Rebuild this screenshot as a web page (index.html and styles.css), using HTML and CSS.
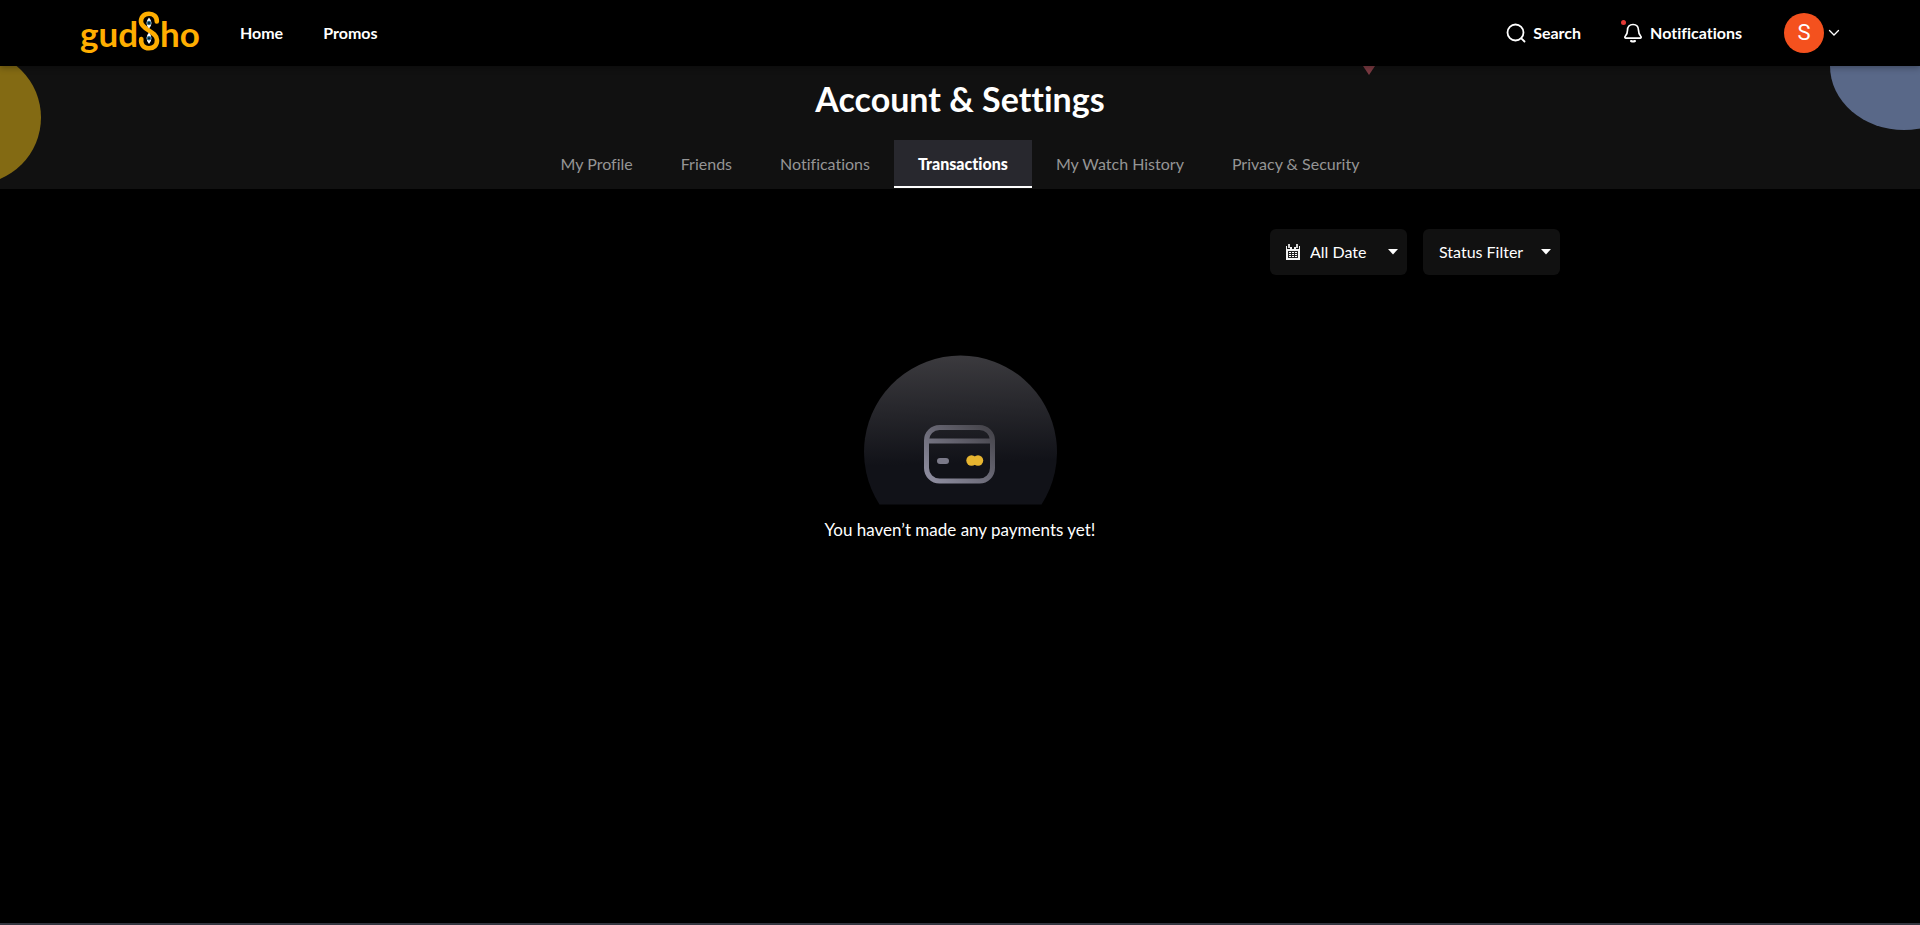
FILE: index.html
```
<!DOCTYPE html>
<html lang="en">
<head>
<meta charset="utf-8">
<meta name="viewport" content="width=device-width, initial-scale=1">
<title>Account &amp; Settings - gudSho</title>
<link rel="stylesheet" href="styles.css">
</head>
<body>
<header class="topbar">
  <a class="logo" href="#" aria-label="gudSho">
    <span>gud</span>
    <svg class="logo-mark" viewBox="0 0 22 40" width="22" height="40" aria-hidden="true">
      <path d="M18.800 10.500C19 5.500 15.500 2.700 11 2.700C5.500 2.700 2.700 6.500 3 11C3.600 18.500 18.700 20.500 19 29C19.200 34.500 15.500 37.300 11 37.300C5.800 37.300 2.300 33.500 3.300 28" fill="none" stroke="#ffae00" stroke-width="4.600" stroke-linecap="round"/>
      <path d="M11 6.500Q16 12 11 17.500Q6 12 11 6.500Z" fill="#fff"/>
      <path d="M11 21.500Q16 27 11 33Q6 27 11 21.500Z" fill="#fff"/>
      <circle cx="11" cy="12" r="2.200" fill="#2c6f91"/><circle cx="11" cy="12" r="1" fill="#04121c"/>
      <circle cx="11" cy="27.300" r="2.200" fill="#2c6f91"/><circle cx="11" cy="27.300" r="1" fill="#04121c"/>
    </svg>
    <span>ho</span>
  </a>
  <nav class="main-nav" aria-label="Main">
    <a href="#">Home</a>
    <a href="#">Promos</a>
  </nav>
  <div class="actions">
    <button class="action" type="button">
      <svg width="20" height="20" viewBox="0 0 20 20" fill="none" stroke="#fff" stroke-width="1.800" stroke-linecap="round" aria-hidden="true"><circle cx="9.500" cy="9.500" r="8"/><path d="M15.300 15.300L18.500 18.500"/></svg>
      Search
    </button>
    <button class="action" type="button">
      <span class="bell">
        <svg width="20" height="20" viewBox="0 0 20 20" fill="none" stroke="#fff" stroke-width="1.700" stroke-linejoin="round" stroke-linecap="round" aria-hidden="true"><path d="M10 1.500C6.500 1.500 4.500 4 4.500 7.300C4.500 11 3.300 12.300 2.100 13.500C1.500 14.300 2 15.100 2.900 15.100H17.100C18 15.100 18.500 14.300 17.900 13.500C16.700 12.300 15.500 11 15.500 7.300C15.500 4 13.500 1.500 10 1.500Z"/><path d="M8 18Q10 19 12 18" stroke-width="2"/></svg>
        <span class="dot"></span>
      </span>
      Notifications
    </button>
    <button class="account" type="button" aria-label="Account menu">
      <span class="avatar">S</span>
      <svg width="12" height="8" viewBox="0 0 12 8" fill="none" stroke="#fff" stroke-width="1.300" stroke-linecap="round" aria-hidden="true"><path d="M1.500 1.500L6 6L10.500 1.500"/></svg>
    </button>
  </div>
</header>

<section class="hero">
  <span class="shape shape-gold"></span>
  <span class="shape shape-blue"></span>
  <span class="shape shape-red"></span>
  <h1>Account &amp; Settings</h1>
  <nav class="tabs" aria-label="Account">
    <a href="#">My Profile</a>
    <a href="#">Friends</a>
    <a href="#">Notifications</a>
    <a class="active" href="#" aria-current="page">Transactions</a>
    <a href="#">My Watch History</a>
    <a href="#">Privacy &amp; Security</a>
  </nav>
</section>

<main class="content">
  <div class="filters">
    <div class="filter filter-date">
      <select aria-label="Date"><option>All Date</option></select>
      <svg class="calendar" width="14" height="16" viewBox="0 0 14 16" aria-hidden="true">
        <path d="M0 2H1V5H4V3H6V5H8V3H10V5H13V2H14V16H0Z" fill="#f2f2f2"/>
        <path d="M2 0H4V4H2ZM10 0H12V4H10Z" fill="#d0d0d0"/>
        <path d="M5 3H6V5H5ZM8 3H9V5H8Z" fill="#f2f2f2"/>
        <path d="M2 7H12V14H2Z" fill="#222"/>
        <path d="M3 8H5V9H3ZM6 8H8V9H6ZM9 8H11V9H9ZM3 10H5V11H3ZM6 10H8V11H6ZM9 10H11V11H9ZM3 12H5V13H3ZM6 12H8V13H6ZM9 12H11V13H9Z" fill="#fff"/>
      </svg>
      <svg class="caret" width="10" height="6" viewBox="0 0 10 6" aria-hidden="true"><path d="M0 0H10L5 5.500Z" fill="#fff"/></svg>
    </div>
    <div class="filter">
      <select aria-label="Status"><option>Status Filter</option></select>
      <svg class="caret" width="10" height="6" viewBox="0 0 10 6" aria-hidden="true"><path d="M0 0H10L5 5.500Z" fill="#fff"/></svg>
    </div>
  </div>
  <div class="empty">
    <svg width="194" height="150" viewBox="0 0 194 150" aria-hidden="true">
      <defs>
        <linearGradient id="disc" x1="0.500" y1="0" x2="0.540" y2="1"><stop offset="0" stop-color="#3b3a3e"/><stop offset="0.720" stop-color="#111218"/></linearGradient>
        <linearGradient id="card" gradientUnits="userSpaceOnUse" x1="76" y1="128" x2="121" y2="72"><stop offset="0" stop-color="#8b8a9c"/><stop offset="1" stop-color="#47464d"/></linearGradient>
      </defs>
      <path d="M16.500 149.500A96.500 96.500 0 1 1 178.500 149.500Z" fill="url(#disc)"/>
      <g fill="none" stroke="url(#card)" stroke-width="5"><rect x="63.500" y="72.500" width="66" height="53.500" rx="13"/><path d="M64 86L129 86.100"/></g>
      <rect x="74" y="103" width="12" height="6" rx="3" fill="#7b7a89"/>
      <circle cx="108.500" cy="105.500" r="5.200" fill="#e7b530"/><circle cx="115" cy="105.500" r="5.200" fill="#e7b530"/>
    </svg>
    <p>You haven’t made any payments yet!</p>
  </div>
</main>
<footer class="baseline"></footer>
</body>
</html>
```
FILE: styles.css
```
* { box-sizing: border-box; }

body {
  margin: 0;
  min-height: 100vh;
  display: flex;
  flex-direction: column;
  background: #000;
  color: #fff;
  font-family: Lato, "Open Sans", sans-serif;
  font-size: 16px;
  line-height: 24px;
  font-variant-ligatures: none;
}

a { color: inherit; text-decoration: none; }

button {
  padding: 0;
  border: 0;
  background: none;
  color: inherit;
  font: inherit;
  cursor: pointer;
}

.topbar {
  position: relative;
  z-index: 1;
  display: flex;
  align-items: center;
  height: 66px;
  padding: 0 80px;
  background: #000;
  box-shadow: 0 2px 6px rgba(0, 0, 0, 0.3);
  font-weight: 700;
}

.logo {
  display: flex;
  align-items: center;
  color: #ffae00;
  font-size: 35px;
  line-height: 40px;
}

.logo-mark { margin-bottom: 4px; }

.main-nav {
  display: flex;
  gap: 40px;
  margin-left: 40px;
}

.actions {
  display: flex;
  align-items: center;
  margin-left: auto;
  gap: 42px;
}

.action {
  display: flex;
  align-items: center;
  gap: 7px;
  font-weight: 700;
}

.bell { position: relative; display: flex; }

.dot {
  position: absolute;
  top: -3px;
  left: -2px;
  width: 5px;
  height: 5px;
  border-radius: 50%;
  background: #e53935;
}

.account {
  display: flex;
  align-items: center;
  gap: 4px;
}

.avatar {
  display: grid;
  place-items: center;
  width: 40px;
  height: 40px;
  border-radius: 50%;
  background: #f4511e;
  font-family: Roboto, sans-serif;
  font-size: 22px;
  font-weight: 400;
}

.hero {
  position: relative;
  overflow: hidden;
  display: flex;
  flex-direction: column;
  align-items: center;
  padding: 13px 0 1px;
  background: #111;
}

.hero h1 {
  position: relative;
  margin: 0 0 21px;
  font-size: 34px;
  font-weight: 700;
  line-height: 40px;
}

.shape { position: absolute; }

.shape-gold {
  top: -15px;
  left: -92px;
  width: 133px;
  height: 133px;
  border-radius: 50%;
  background: #836a13;
}

.shape-blue {
  top: -64px;
  right: -58px;
  width: 148px;
  height: 128px;
  border-radius: 50%;
  background: #596888;
}

.shape-red {
  top: 0;
  right: 545px;
  width: 12px;
  height: 9px;
  background: #7b3a42;
  clip-path: polygon(0 0, 100% 0, 50% 100%);
}

.tabs {
  position: relative;
  display: flex;
  color: #959595;
}

.tabs a {
  height: 48px;
  padding: 0 24px;
  border-bottom: 2px solid transparent;
  line-height: 48px;
}

.tabs .active {
  border-bottom-color: #fff;
  background: #28282e;
  color: #fff;
  font-weight: 900;
}

.content {
  flex: 1;
  width: 100%;
  max-width: 1200px;
  margin: 0 auto;
  padding: 40px 0;
}

.filters {
  display: flex;
  justify-content: flex-end;
  gap: 16px;
}

.filter {
  display: grid;
  align-items: center;
  width: 137px;
}

.filter > * { grid-area: 1 / 1; }

.filter select {
  width: 100%;
  height: 46px;
  padding: 0 28px 0 16px;
  border: 0;
  border-radius: 6px;
  appearance: none;
  background: #111;
  color: #fff;
  font: inherit;
}

.filter-date select { padding-left: 40px; }

.filter svg { pointer-events: none; }

.calendar { margin-left: 16px; }

.caret {
  justify-self: end;
  margin-right: 9px;
}

.empty {
  display: flex;
  flex-direction: column;
  align-items: center;
  margin-top: 80px;
}

.empty p {
  margin: 13px 0 0;
  font-size: 17px;
}

.baseline {
  height: 2px;
  background: #343640;
}
```
